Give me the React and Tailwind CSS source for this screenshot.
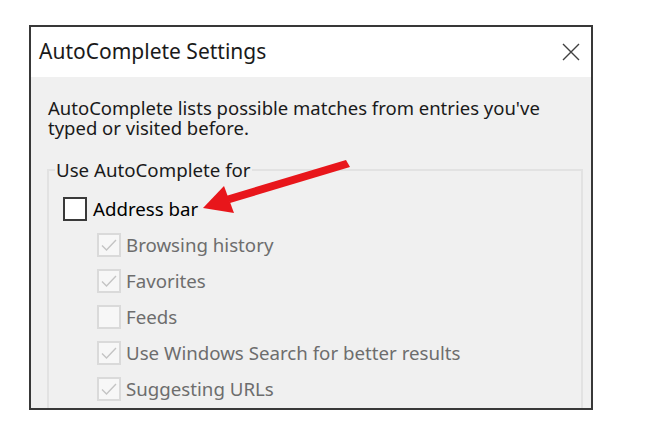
const items = [
  { label: "Browsing history", checked: true },
  { label: "Favorites", checked: true },
  { label: "Feeds", checked: false },
  { label: "Use Windows Search for better results", checked: true },
  { label: "Suggesting URLs", checked: true },
];

const font = { fontFamily: '"Noto Sans", "Open Sans", sans-serif' };

function CloseIcon() {
  return (
    <svg width="18" height="18" viewBox="0 0 18 18" fill="none">
      <path d="M1 1 L17 17 M17 1 L1 17" stroke="#404040" strokeWidth="1.4" />
    </svg>
  );
}

function DisabledBox({ checked }) {
  return (
    <div className="w-[24px] h-[24px] border-2 border-[#dadada] bg-[#f7f7f7] flex items-center justify-center shrink-0">
      {checked && (
        <svg width="20" height="20" viewBox="0 0 20 20" fill="none">
          <path d="M3 10.5 L7.5 15 L17 5" stroke="#c4c4c4" strokeWidth="1.4" />
        </svg>
      )}
    </div>
  );
}

export default function App() {
  return (
    <div className="w-[647px] h-[443px] bg-white pt-[25px] pl-[29px] relative" style={font}>
      <div className="w-[564px] h-[385px] border-2 border-[#383838] bg-[#f0f0f0] flex flex-col overflow-hidden">
        {/* title bar */}
        <div className="h-[50px] bg-white flex items-center justify-between pl-[8px] pr-[11px] shrink-0">
          <span className="text-[21px] text-[#1a1a1a]">AutoComplete Settings</span>
          <CloseIcon />
        </div>

        <div className="pt-[21px] pl-[17px] pr-[8px]">
          <p className="text-[18.5px] leading-[20px] text-[#1a1a1a] whitespace-nowrap">
            AutoComplete lists possible matches from entries you've
            <br />
            typed or visited before.
          </p>

          <fieldset className="mt-[21px] -ml-[1px] border-2 border-[#e2e2e2] pl-[14px] pr-[10px] pb-[20px]">
            <legend className="-ml-[8px] px-[1px] text-[18.7px] leading-[22px] text-[#1a1a1a]">
              Use AutoComplete for
            </legend>
            <div className="flex flex-col gap-[12px] mt-[16px]">
              <div className="h-[24px] flex items-center gap-[6px]">
                <div className="w-[24px] h-[24px] border-2 border-[#3a3a3a] bg-white shrink-0" />
                <span className="text-[18.7px] text-black">Address bar</span>
              </div>
              {items.map((it) => (
                <div key={it.label} className="h-[24px] flex items-center gap-[5px] pl-[34px]">
                  <DisabledBox checked={it.checked} />
                  <span className="text-[18.7px] text-[#6d6d6d]">{it.label}</span>
                </div>
              ))}
            </div>
          </fieldset>
        </div>
      </div>

      {/* red annotation arrow */}
      <svg className="absolute left-0 top-0 pointer-events-none" width="647" height="443" viewBox="0 0 647 443">
        <path d="M346 160 L350 167 L230 203 L226 196 Z" fill="#e8161b" />
        <path d="M203 208 L224 186 L234 213 Z" fill="#e8161b" />
      </svg>
    </div>
  );
}
